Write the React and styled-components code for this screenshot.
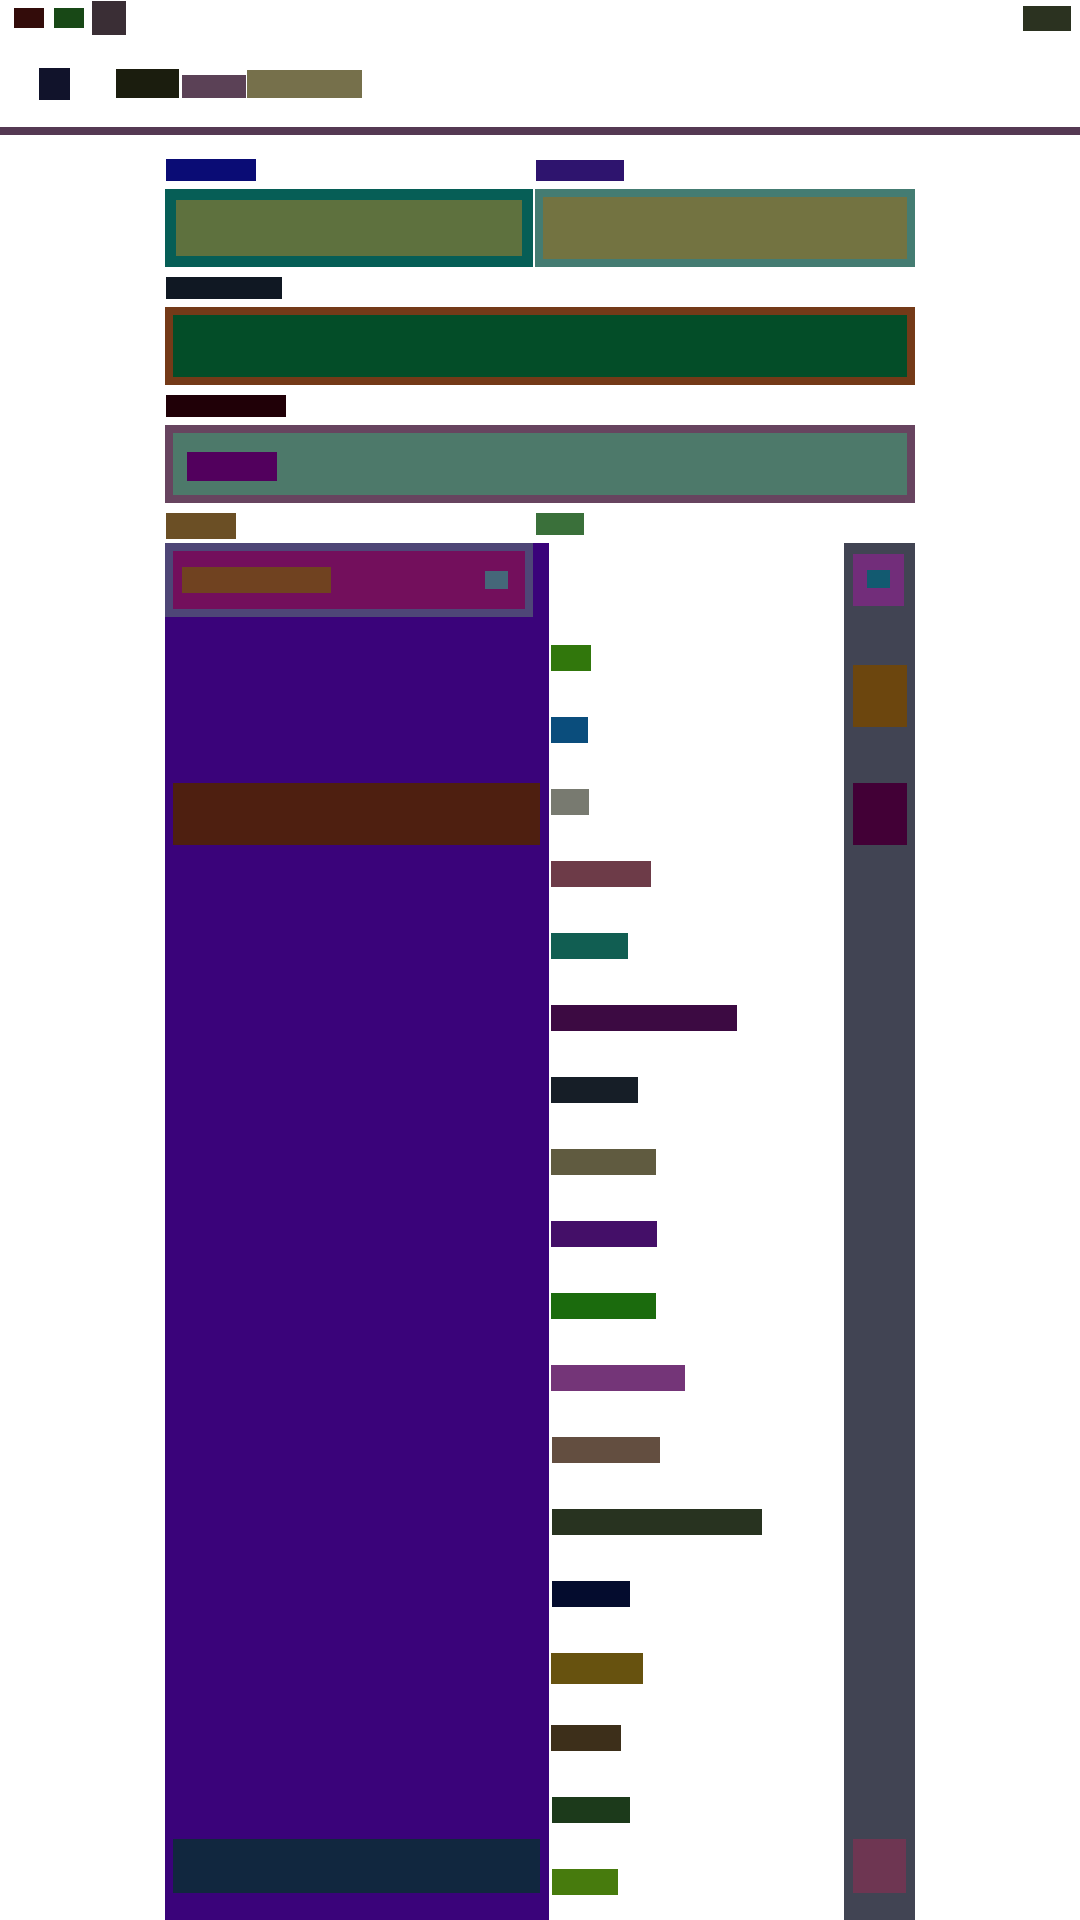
import styled, { createGlobalStyle } from "styled-components";

const GlobalStyle = createGlobalStyle`
  html, body {
    margin: 0;
    padding: 0;
    background: #ffffff;
    font-family: "Liberation Sans", Arial, sans-serif;
  }
`;

const Page = styled.div`
  width: 1080px;
  min-height: 1920px;
  background: #ffffff;
  overflow: hidden;
`;

const TopRow = styled.div`
  display: flex;
  align-items: flex-start;
  height: 35px;
  padding: 0 9px 0 14px;
`;

const NavRow = styled.div`
  display: flex;
  align-items: flex-start;
  height: 32px;
  margin-top: 33px;
  padding-left: 39px;
`;

const Chip = styled.div`
  flex: none;
  width: ${(p) => p.w}px;
  height: ${(p) => p.h}px;
  margin-top: ${(p) => p.top || 0}px;
  margin-left: ${(p) => p.left || 0}px;
  background: ${(p) => p.bg};
`;

const Spacer = styled.div`
  flex: 1;
`;

const Divider = styled.div`
  height: 8px;
  margin-top: 27px;
  background: #553953;
`;

const Main = styled.main`
  width: 750px;
  margin: 24px 0 0 165px;
`;

const Label = styled.div`
  width: ${(p) => p.w}px;
  height: ${(p) => p.h || 22}px;
  margin: ${(p) => p.top || 0}px 0 8px ${(p) => p.left ?? 1}px;
  background: ${(p) => p.bg};
`;

const PairRow = styled.div`
  display: flex;
  gap: 2px;
`;

const Half = styled.div`
  display: flex;
  flex-direction: column;
  width: ${(p) => p.w}px;
`;

const Frame = styled.div`
  display: flex;
  height: 78px;
  box-sizing: border-box;
  padding: ${(p) => p.pad}px;
  background: ${(p) => p.bg};
  margin-bottom: 10px;
`;

const Panel = styled.div`
  flex: 1;
  display: flex;
  align-items: center;
  padding-left: 14px;
  background: ${(p) => p.bg};
`;

const Badge = styled.div`
  width: 90px;
  height: 29px;
  margin-top: 5px;
  background: #52005d;
`;

const LabelRow = styled.div`
  display: flex;
  align-items: flex-start;
  height: 30px;
`;

const Columns = styled.div`
  display: flex;
  align-items: stretch;
`;

const LeftCol = styled.div`
  width: 384px;
  flex: none;
  background: #3a037a;
`;

const Card = styled.div`
  width: 368px;
  height: 74px;
  box-sizing: border-box;
  padding: 8px;
  background: #4e4677;
`;

const CardInner = styled.div`
  height: 100%;
  display: flex;
  align-items: center;
  justify-content: space-between;
  padding: 0 17px 0 9px;
  background: #730f5c;
`;

const CardTitle = styled.div`
  width: 149px;
  height: 26px;
  background: #704220;
`;

const CardIcon = styled.div`
  width: 23px;
  height: 18px;
  background: #456779;
`;

const Slab = styled.div`
  width: 367px;
  height: ${(p) => p.h}px;
  margin: ${(p) => p.top}px 0 0 8px;
  background: ${(p) => p.bg};
`;

const List = styled.ul`
  flex: 1;
  margin: 0;
  padding: 102px 0 0 2px;
  list-style: none;
`;

const ListRow = styled.li`
  height: 72px;
  display: flex;
  align-items: flex-start;
`;

const ListBar = styled.div`
  width: ${(p) => p.w}px;
  height: ${(p) => p.h || 26}px;
  margin-left: ${(p) => p.indent || 0}px;
  background: ${(p) => p.bg};
`;

const Sidebar = styled.aside`
  width: 71px;
  flex: none;
  box-sizing: border-box;
  padding-left: 9px;
  background: #414453;
`;

const Tile = styled.div`
  display: flex;
  align-items: center;
  justify-content: center;
  width: ${(p) => p.w}px;
  height: ${(p) => p.h}px;
  margin-top: ${(p) => p.top}px;
  background: ${(p) => p.bg};
`;

const TileDot = styled.div`
  width: 23px;
  height: 18px;
  margin-top: -2px;
  background: #125a70;
`;

const items = [
  { w: 40, bg: "#31770c" },
  { w: 37, bg: "#0a4d7c" },
  { w: 38, bg: "#787a70" },
  { w: 100, bg: "#6d3b48" },
  { w: 77, bg: "#115e52" },
  { w: 186, bg: "#3c0a42" },
  { w: 87, bg: "#161e27" },
  { w: 105, bg: "#605b40" },
  { w: 106, bg: "#440f68" },
  { w: 105, bg: "#1b6b0d" },
  { w: 134, bg: "#743578" },
  { w: 108, bg: "#634e40", indent: 1 },
  { w: 210, bg: "#283320", indent: 1 },
  { w: 78, bg: "#040c2e", indent: 1 },
  { w: 92, bg: "#67520f", h: 31 },
  { w: 70, bg: "#3d2f1a" },
  { w: 78, bg: "#1c3a1b", indent: 1 },
  { w: 66, bg: "#477b0d", indent: 1 },
];

export default function App() {
  return (
    <Page>
      <GlobalStyle />
      <TopRow>
        <Chip w={30} h={20} top={8} bg="#330c0a" />
        <Chip w={30} h={20} top={8} left={10} bg="#184816" />
        <Chip w={34} h={34} top={1} left={8} bg="#3a2e35" />
        <Spacer />
        <Chip w={48} h={25} top={6} bg="#2b3220" />
      </TopRow>
      <NavRow>
        <Chip w={31} h={32} bg="#11132b" />
        <Chip w={63} h={29} top={1} left={46} bg="#1b1d0e" />
        <Chip w={64} h={23} top={7} left={3} bg="#5b4156" />
        <Chip w={115} h={28} top={2} left={1} bg="#76704b" />
      </NavRow>
      <Divider />

      <Main>
        <PairRow>
          <Half w={368}>
            <Label w={90} bg="#0a0c75" />
            <Frame pad={11} bg="#065e56">
              <Panel bg="#5e713e" />
            </Frame>
          </Half>
          <Half w={380}>
            <Label w={88} h={21} top={1} bg="#2e146e" />
            <Frame pad={8} bg="#447c72">
              <Panel bg="#737341" />
            </Frame>
          </Half>
        </PairRow>

        <Label w={116} bg="#101823" />
        <Frame pad={8} bg="#743a18">
          <Panel bg="#034d28" />
        </Frame>

        <Label w={120} bg="#200007" />
        <Frame pad={8} bg="#67445f">
          <Panel bg="#4d796a">
            <Badge />
          </Panel>
        </Frame>

        <LabelRow>
          <Chip w={70} h={26} left={1} bg="#6b4f25" />
          <Chip w={48} h={22} left={300} bg="#3a703a" />
        </LabelRow>

        <Columns>
          <LeftCol>
            <Card>
              <CardInner>
                <CardTitle />
                <CardIcon />
              </CardInner>
            </Card>
            <Slab top={166} h={62} bg="#4e1f10" />
            <Slab top={994} h={54} bg="#11273f" />
          </LeftCol>

          <List>
            {items.map((it, i) => (
              <ListRow key={i}>
                <ListBar w={it.w} h={it.h} indent={it.indent} bg={it.bg} />
              </ListRow>
            ))}
          </List>

          <Sidebar>
            <Tile w={51} h={52} top={11} bg="#722d7a">
              <TileDot />
            </Tile>
            <Tile w={54} h={62} top={59} bg="#6c460e" />
            <Tile w={54} h={62} top={56} bg="#420036" />
            <Tile w={53} h={54} top={994} bg="#6e3652" />
          </Sidebar>
        </Columns>
      </Main>
    </Page>
  );
}
